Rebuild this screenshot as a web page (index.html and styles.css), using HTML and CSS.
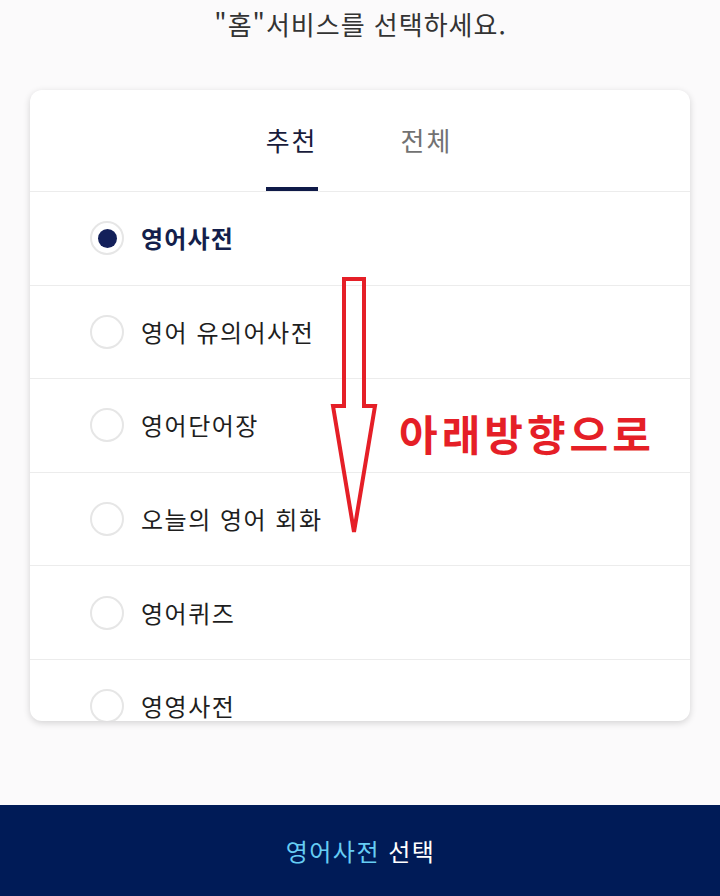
FILE: index.html
```html
<!DOCTYPE html>
<html lang="ko">
<head>
<meta charset="utf-8">
<link rel="stylesheet" href="styles.css">
</head>
<body>
<div class="page">
  <div class="title">"홈"서비스를 선택하세요.</div>
  <div class="card">
    <div class="tabs">
      <div class="tab active">추천</div>
      <div class="tab">전체</div>
    </div>
    <div class="list">
      <div class="row selected"><span class="radio"></span><span class="label">영어사전</span></div>
      <div class="row"><span class="radio"></span><span class="label">영어 유의어사전</span></div>
      <div class="row"><span class="radio"></span><span class="label">영어단어장</span></div>
      <div class="row"><span class="radio"></span><span class="label">오늘의 영어 회화</span></div>
      <div class="row"><span class="radio"></span><span class="label">영어퀴즈</span></div>
      <div class="row"><span class="radio"></span><span class="label">영영사전</span></div>
    </div>
  </div>
  <div class="spacer"></div>
  <div class="bottom"><span class="sel">영어사전</span>&nbsp;선택</div>
  <svg class="arrow" width="720" height="896" viewBox="0 0 720 896">
    <polygon points="344,279 364,279 364,406 375,406 354,532 333,406 344,406" fill="none" stroke="#e51f27" stroke-width="4" stroke-linejoin="miter"/>
  </svg>
  <div class="note">아래방향으로</div>
</div>
</body>
</html>
```
FILE: styles.css
```css
* { box-sizing: border-box; }
html, body { margin: 0; padding: 0; }
body {
  background: #fbfafb;
  font-family: "Noto Sans CJK KR", "Noto Sans", sans-serif;
  width: 720px;
  height: 896px;
  overflow: hidden;
}
.page {
  position: relative;
  width: 720px;
  height: 896px;
  display: flex;
  flex-direction: column;
}
.title {
  height: 90px;
  padding-top: 9px;
  padding-left: 1px;
  text-align: center;
  font-size: 26px;
  line-height: 30px;
  letter-spacing: 1px;
  color: #333;
}
.card {
  margin: 0 30px;
  height: 631px;
  background: #fff;
  border-radius: 12px;
  box-shadow: 0 2px 7px rgba(0,0,0,0.16);
  overflow: hidden;
}
.tabs {
  height: 102px;
  display: flex;
  justify-content: center;
  gap: 83px;
  border-bottom: 1.5px solid #ececec;
  padding-right: 2px;
}
.tab {
  height: 101px;
  padding-top: 35px;
  font-size: 26px;
  line-height: 30px;
  letter-spacing: 2px;
  color: #727272;
  border-bottom: 4px solid transparent;
}
.tab.active {
  color: #191c3c;
  border-bottom-color: #0f1a48;
}
.row {
  height: 93.6px;
  display: flex;
  align-items: center;
  padding-left: 60px;
  gap: 17px;
  border-bottom: 1px solid #ececec;
}
.radio {
  width: 34px;
  height: 34px;
  border-radius: 50%;
  border: 2px solid #e6e6e6;
  display: flex;
  align-items: center;
  justify-content: center;
  flex: none;
}
.row.selected .radio::after {
  content: "";
  width: 19px;
  height: 19px;
  border-radius: 50%;
  background: #13205a;
}
.label {
  font-size: 24px;
  line-height: 30px;
  letter-spacing: 1.5px;
  color: #1e1e1e;
}
.row.selected .label {
  font-weight: 700;
  letter-spacing: 1.2px;
  color: #141f4c;
}
.spacer { flex: 1; }
.bottom {
  height: 91px;
  background: #001b57;
  color: #fff;
  display: flex;
  align-items: center;
  justify-content: center;
  font-size: 24px;
  line-height: 30px;
  letter-spacing: 1.5px;
  padding-left: 1px;
}
.sel { color: #66cdf4; }
.arrow {
  position: absolute;
  left: 0;
  top: 0;
  pointer-events: none;
}
.note {
  position: absolute;
  left: 399px;
  top: 409px;
  font-size: 42px;
  line-height: 48px;
  font-weight: 700;
  letter-spacing: 4px;
  color: #e51f27;
  white-space: nowrap;
}
```
